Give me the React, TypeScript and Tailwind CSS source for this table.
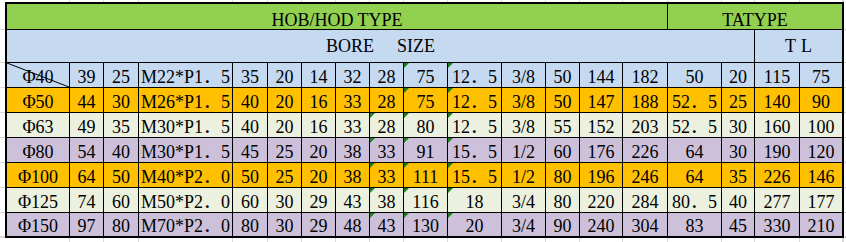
import React from 'react';

type Tone = 'blue' | 'orange' | 'cream' | 'purple';

const toneBg: Record<Tone, string> = {
  blue: 'bg-[#c5d9f1]',
  orange: 'bg-[#ffc000]',
  cream: 'bg-[#ebf1de]',
  purple: 'bg-[#ccc0da]',
};

// column / row tracks shared by the table and the sheet gridlines around it
const COLS =
  'grid-cols-[62px_33px_34px_93px_34px_33px_33px_33px_33px_43px_53px_43px_33px_42px_44px_53px_32px_44px_42px]';
const ROWS = 'grid-rows-[25px_32px_24px_24px_24px_24px_24px_24px_23px]';

const rows: { tone: Tone; cells: string[] }[] = [
  { tone: 'blue', cells: ['Φ40', '39', '25', 'M22*P1．5', '35', '20', '14', '32', '28', '75', '12．5', '3/8', '50', '144', '182', '50', '20', '115', '75'] },
  { tone: 'orange', cells: ['Φ50', '44', '30', 'M26*P1．5', '40', '20', '16', '33', '28', '75', '12．5', '3/8', '50', '147', '188', '52．5', '25', '140', '90'] },
  { tone: 'cream', cells: ['Φ63', '49', '35', 'M30*P1．5', '40', '20', '16', '33', '28', '80', '12．5', '3/8', '55', '152', '203', '52．5', '30', '160', '100'] },
  { tone: 'purple', cells: ['Φ80', '54', '40', 'M30*P1．5', '45', '25', '20', '38', '33', '91', '15．5', '1/2', '60', '176', '226', '64', '30', '190', '120'] },
  { tone: 'orange', cells: ['Φ100', '64', '50', 'M40*P2．0', '50', '25', '20', '38', '33', '111', '15．5', '1/2', '80', '196', '246', '64', '35', '226', '146'] },
  { tone: 'cream', cells: ['Φ125', '74', '60', 'M50*P2．0', '60', '30', '29', '43', '38', '116', '18', '3/4', '80', '220', '284', '80．5', '40', '277', '177'] },
  { tone: 'purple', cells: ['Φ150', '97', '80', 'M70*P2．0', '80', '30', '29', '48', '43', '130', '20', '3/4', '90', '240', '304', '83', '45', '330', '210'] },
];

// "number stored as text" marker, like Excel's green corner
const hasMarker = (row: number, col: number) => col === 9 || col === 10 || (col === 8 && row >= 2);

const GridStripH: React.FC<{ className?: string }> = ({ className = '' }) => (
  <div className={`grid ${COLS} gap-x-px bg-[#d9d9d9] ${className}`}>
    {Array.from({ length: 19 }).map((_, i) => (
      <div key={i} className="bg-white" />
    ))}
  </div>
);

const GridStripV: React.FC = () => (
  <div className={`grid ${ROWS} gap-y-px bg-[#d9d9d9] mt-[2px]`}>
    {Array.from({ length: 9 }).map((_, i) => (
      <div key={i} className="bg-white" />
    ))}
  </div>
);

export default function App() {
  return (
    <div className="w-[846px] h-[242px] bg-white overflow-hidden grid grid-cols-[5px_839px_2px] grid-rows-[2px_auto_1fr] [font-family:'Liberation_Serif','Noto_Sans_CJK_SC',serif] text-black">
      <div />
      <GridStripH className="ml-[2px] h-[2px]" />
      <div />

      <GridStripV />

      {/* Table */}
      <div className="border-2 border-black">
        <div className={`grid ${COLS} ${ROWS} gap-px bg-black text-[18px] leading-[18px]`}>
          <div className="col-span-15 bg-[#92d050] flex items-end justify-center">HOB/HOD TYPE</div>
          <div className="col-span-4 bg-[#92d050] flex items-end justify-center">TATYPE</div>

          <div className="col-span-17 bg-[#c5d9f1] flex items-center justify-center whitespace-pre [word-spacing:7px]">
            BORE  SIZE
          </div>
          <div className="col-span-2 bg-[#c5d9f1] flex items-center justify-center tracking-[5px] pl-[5px]">TL</div>

          {rows.map((row, r) =>
            row.cells.map((cell, c) => (
              <div
                key={`${r}-${c}`}
                className={`relative ${toneBg[row.tone]} flex items-end justify-center pb-px`}
              >
                <span className="whitespace-nowrap">{cell}</span>
                {hasMarker(r, c) && (
                  <span className="absolute top-0 left-0 w-0 h-0 border-t-[5px] border-r-[5px] border-t-[#1e7e1e] border-r-transparent" />
                )}
                {r === 0 && c === 0 && (
                  <svg className="absolute top-0 left-0 w-[62px] h-[24px] pointer-events-none" viewBox="0 0 62 24">
                    <line x1="0" y1="0" x2="62" y2="24" stroke="#000" strokeWidth="1" />
                  </svg>
                )}
              </div>
            ))
          )}
        </div>
      </div>

      <GridStripV />

      <div />
      <GridStripH className="ml-[2px] h-full" />
      <div />
    </div>
  );
}
